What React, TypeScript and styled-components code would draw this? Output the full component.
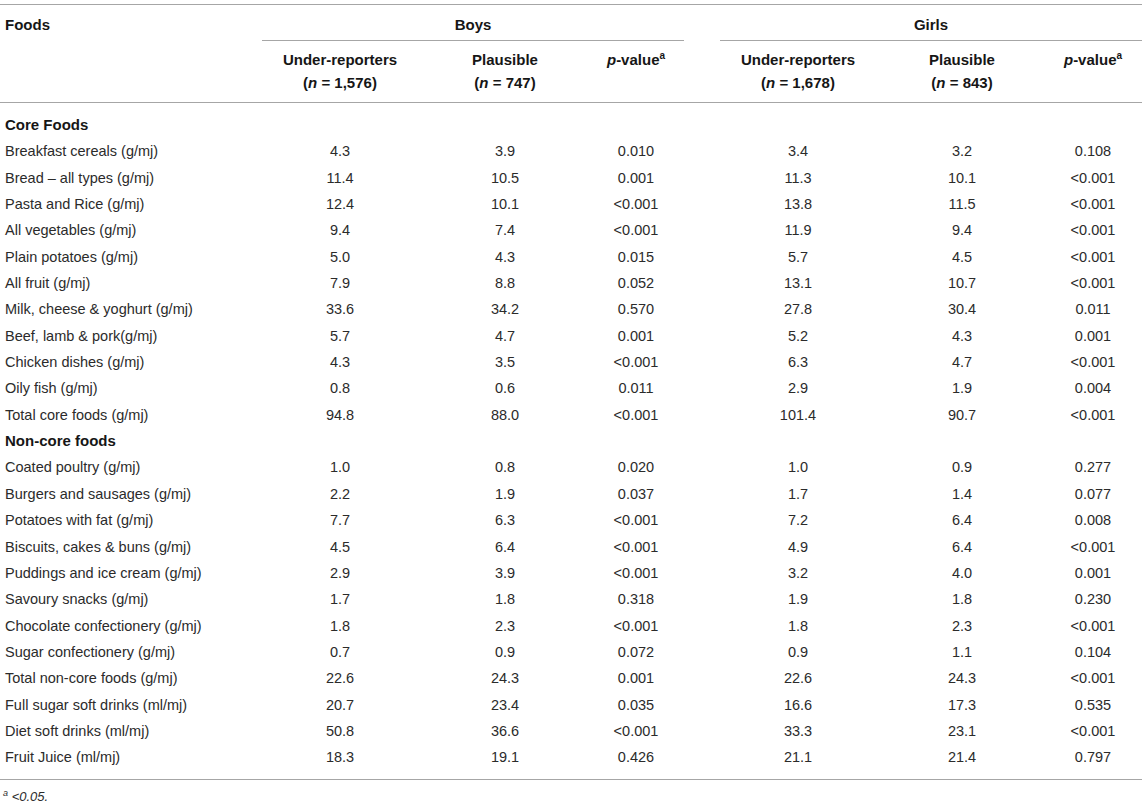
import React from 'react';
import styled, { createGlobalStyle } from 'styled-components';

type Row = [string, string, string, string, string, string, string];

const coreFoods: Row[] = [
  ['Breakfast cereals (g/mj)', '4.3', '3.9', '0.010', '3.4', '3.2', '0.108'],
  ['Bread – all types (g/mj)', '11.4', '10.5', '0.001', '11.3', '10.1', '<0.001'],
  ['Pasta and Rice (g/mj)', '12.4', '10.1', '<0.001', '13.8', '11.5', '<0.001'],
  ['All vegetables (g/mj)', '9.4', '7.4', '<0.001', '11.9', '9.4', '<0.001'],
  ['Plain potatoes (g/mj)', '5.0', '4.3', '0.015', '5.7', '4.5', '<0.001'],
  ['All fruit (g/mj)', '7.9', '8.8', '0.052', '13.1', '10.7', '<0.001'],
  ['Milk, cheese & yoghurt (g/mj)', '33.6', '34.2', '0.570', '27.8', '30.4', '0.011'],
  ['Beef, lamb & pork(g/mj)', '5.7', '4.7', '0.001', '5.2', '4.3', '0.001'],
  ['Chicken dishes (g/mj)', '4.3', '3.5', '<0.001', '6.3', '4.7', '<0.001'],
  ['Oily fish (g/mj)', '0.8', '0.6', '0.011', '2.9', '1.9', '0.004'],
  ['Total core foods (g/mj)', '94.8', '88.0', '<0.001', '101.4', '90.7', '<0.001'],
];

const nonCoreFoods: Row[] = [
  ['Coated poultry (g/mj)', '1.0', '0.8', '0.020', '1.0', '0.9', '0.277'],
  ['Burgers and sausages (g/mj)', '2.2', '1.9', '0.037', '1.7', '1.4', '0.077'],
  ['Potatoes with fat (g/mj)', '7.7', '6.3', '<0.001', '7.2', '6.4', '0.008'],
  ['Biscuits, cakes & buns (g/mj)', '4.5', '6.4', '<0.001', '4.9', '6.4', '<0.001'],
  ['Puddings and ice cream (g/mj)', '2.9', '3.9', '<0.001', '3.2', '4.0', '0.001'],
  ['Savoury snacks (g/mj)', '1.7', '1.8', '0.318', '1.9', '1.8', '0.230'],
  ['Chocolate confectionery (g/mj)', '1.8', '2.3', '<0.001', '1.8', '2.3', '<0.001'],
  ['Sugar confectionery (g/mj)', '0.7', '0.9', '0.072', '0.9', '1.1', '0.104'],
  ['Total non-core foods (g/mj)', '22.6', '24.3', '0.001', '22.6', '24.3', '<0.001'],
  ['Full sugar soft drinks (ml/mj)', '20.7', '23.4', '0.035', '16.6', '17.3', '0.535'],
  ['Diet soft drinks (ml/mj)', '50.8', '36.6', '<0.001', '33.3', '23.1', '<0.001'],
  ['Fruit Juice (ml/mj)', '18.3', '19.1', '0.426', '21.1', '21.4', '0.797'],
];

const groups = [
  { title: 'Boys', cols: '164px 166px 96px', offset: 0, under: '1,576', plausible: '747' },
  { title: 'Girls', cols: '164px 164px 98px', offset: 32, under: '1,678', plausible: '843' },
];

const App = () => {
  return (
    <>
      <GlobalStyle />
      <Table>
        <Head>
          <FoodsHead>Foods</FoodsHead>
          {groups.map((g) => (
            <GroupHead key={g.title} $offset={g.offset}>
              <GroupTitle>{g.title}</GroupTitle>
              <Group $cols={g.cols}>
                <SubHead>
                  Under-reporters
                  <br />(<i>n</i> = {g.under})
                </SubHead>
                <SubHead>
                  Plausible
                  <br />(<i>n</i> = {g.plausible})
                </SubHead>
                <SubHead>
                  <i>p</i>-value<sup>a</sup>
                </SubHead>
              </Group>
            </GroupHead>
          ))}
        </Head>
        <Body>
          <SectionRow>Core Foods</SectionRow>
          {coreFoods.map((r) => (
            <DataRow key={r[0]} row={r} />
          ))}
          <SectionRow>Non-core foods</SectionRow>
          {nonCoreFoods.map((r) => (
            <DataRow key={r[0]} row={r} />
          ))}
        </Body>
      </Table>
      <Footnote>
        <sup>a</sup> &lt;0.05.
      </Footnote>
    </>
  );
};

const DataRow = ({ row }: { row: Row }) => (
  <RowGrid>
    <Label>{row[0]}</Label>
    {groups.map((g, i) => (
      <Group key={g.title} $cols={g.cols} $offset={g.offset}>
        <Cell>{row[i * 3 + 1]}</Cell>
        <Cell>{row[i * 3 + 2]}</Cell>
        <Cell>{row[i * 3 + 3]}</Cell>
      </Group>
    ))}
  </RowGrid>
);

export default App;

const GlobalStyle = createGlobalStyle`
  body {
    margin: 0;
    background: #ffffff;
    font-family: "Liberation Sans", Arial, Helvetica, sans-serif;
    color: #2b2b2b;
  }
`;

const Table = styled.div`
  width: 1142px;
  margin-top: 4px;
  border-top: 1px solid #a6a6a6;
  border-bottom: 1px solid #a6a6a6;
  font-size: 14.5px;
`;

const Head = styled.div`
  display: grid;
  grid-template-columns: 258px 426px 458px;
  border-bottom: 1px solid #a6a6a6;
  font-size: 15px;
  font-weight: bold;
  color: #161616;
`;

const FoodsHead = styled.div`
  padding: 10px 0 0 5px;
  line-height: 20px;
`;

const GroupHead = styled.div<{ $offset: number }>`
  display: flex;
  flex-direction: column;
  padding-left: ${(p) => p.$offset}px;
`;

const GroupTitle = styled.div`
  margin-left: 4px;
  padding: 10px 0 5px;
  line-height: 20px;
  text-align: center;
  border-bottom: 1px solid #a6a6a6;
`;

const Group = styled.div<{ $cols: string; $offset?: number }>`
  display: grid;
  grid-template-columns: ${(p) => p.$cols};
  padding-left: ${(p) => p.$offset ?? 0}px;
`;

const SubHead = styled.div`
  padding: 7px 0 8px;
  line-height: 23px;
  text-align: center;

  sup {
    font-size: 10px;
    line-height: 0;
    vertical-align: 6px;
  }
`;

const Body = styled.div`
  padding: 9px 0 8px;
`;

const RowGrid = styled.div`
  display: grid;
  grid-template-columns: 258px 426px 458px;
  height: 26.35px;
  line-height: 26.35px;
`;

const Label = styled.div`
  padding-left: 5px;
  white-space: nowrap;
`;

const Cell = styled.div`
  text-align: center;
`;

const SectionRow = styled.div`
  height: 26.35px;
  line-height: 26.35px;
  padding-left: 5px;
  font-size: 15px;
  font-weight: bold;
  color: #161616;
`;

const Footnote = styled.div`
  margin-top: 9px;
  padding-left: 3px;
  font-size: 13px;
  line-height: 16px;
  font-style: italic;

  sup {
    font-size: 9px;
    line-height: 0;
    vertical-align: 5px;
  }
`;
